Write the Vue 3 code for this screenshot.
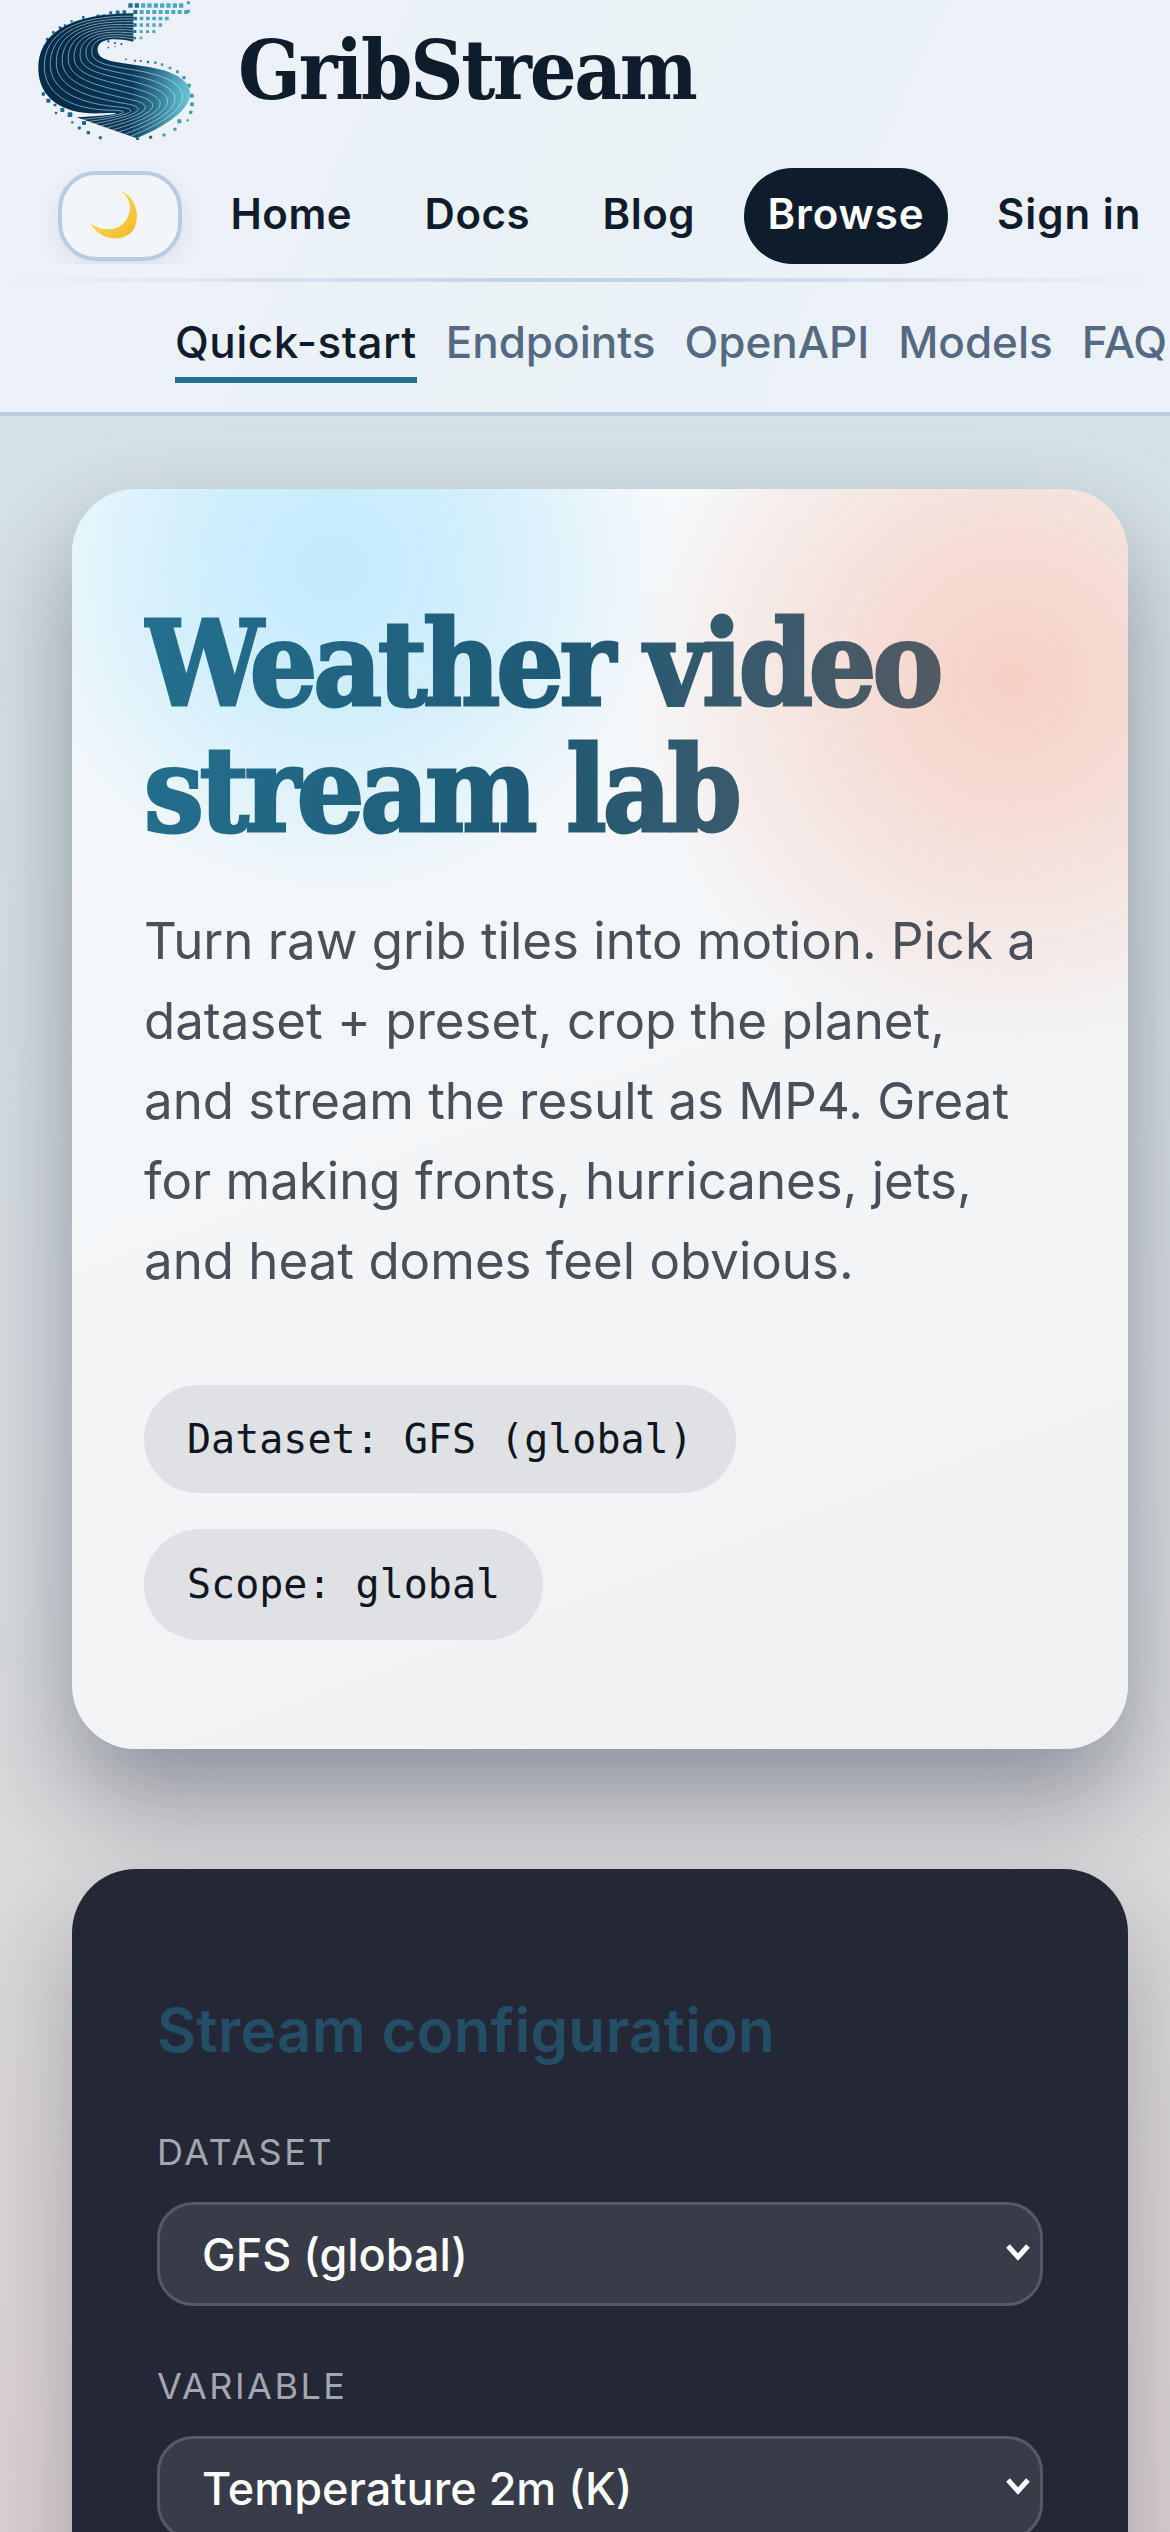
<script setup>
const navLinks = ['Home', 'Docs', 'Blog', 'Browse', 'Sign in']
const subLinks = ['Quick-start', 'Endpoints', 'OpenAPI', 'Models', 'FAQ']

const lerp = (a, b, t) => a + (b - a) * t
// outer and inner edge of the S ribbon, 3 cubic segments each
const edgeA = [340, 40, 150, 40, 52, 100, 55, 210, 58, 300, 135, 345, 245, 340, 320, 336, 300, 345, 170, 352]
const edgeB = [340, 125, 250, 105, 225, 130, 235, 160, 250, 205, 430, 180, 495, 245, 535, 290, 500, 350, 350, 415]
const strands = Array.from({ length: 9 }, (_, i) => {
  const p = edgeA.map((v, n) => lerp(v, edgeB[n], (i + 1) / 10).toFixed(1))
  return `M${p[0]} ${p[1]}C${p.slice(2, 8).join(' ')}C${p.slice(8, 14).join(' ')}C${p.slice(14, 20).join(' ')}`
})
const b = edgeB
const ribbonShape = `M${edgeA[0]} ${edgeA[1]}C${edgeA.slice(2, 8).join(' ')}C${edgeA.slice(8, 14).join(' ')}C${edgeA.slice(14, 20).join(' ')}` +
  `L${b[18]} ${b[19]}C${b[16]} ${b[17]} ${b[14]} ${b[15]} ${b[12]} ${b[13]}C${b[10]} ${b[11]} ${b[8]} ${b[9]} ${b[6]} ${b[7]}C${b[4]} ${b[5]} ${b[2]} ${b[3]} ${b[0]} ${b[1]}Z`

const rows = [[325, 495], [340, 495], [340, 450], [340, 430], [340, 410], [340, 370]]
const pixels = []
rows.forEach(([from, to], r) => {
  for (let x = from; x <= to; x += 19) pixels.push({ x, y: 10 + r * 20, s: 13 - r })
})
const dots = [
  [505, 8, 9], [505, 34, 9], [272, 38, 9], [293, 37, 11], [313, 36, 11], [252, 47, 8], [234, 48, 9], [190, 52, 8], [155, 64, 7],
  [135, 76, 7], [120, 83, 8], [100, 97, 8], [82, 118, 9], [70, 282, 10], [85, 302, 12], [105, 315, 8], [127, 330, 12],
  [108, 339, 7], [150, 344, 14], [157, 367, 7], [192, 369, 12], [178, 384, 9], [205, 398, 10], [241, 413, 9], [353, 418, 9],
  [392, 412, 9], [432, 405, 9], [465, 388, 9], [478, 364, 12], [503, 361, 7], [512, 337, 10], [516, 313, 11], [515, 287, 12],
  [507, 257, 11], [492, 233, 10], [472, 215, 9], [450, 204, 8], [426, 194, 8], [406, 188, 8], [384, 186, 7], [362, 183, 6],
  [345, 182, 6], [318, 178, 5], [285, 129, 6], [304, 132, 6], [265, 124, 7], [265, 143, 5], [285, 140, 4]
]
</script>

<template>
  <div class="page">
    <header class="site-header">
      <div class="brand">
        <svg class="logo" viewBox="0 0 600 420" aria-hidden="true">
          <defs>
            <linearGradient id="ribbon" gradientUnits="userSpaceOnUse" x1="160" y1="220" x2="510" y2="250">
              <stop offset="0" stop-color="#032c4a" />
              <stop offset="0.5" stop-color="#06395a" />
              <stop offset="1" stop-color="#66c5d8" />
            </linearGradient>
          </defs>
          <rect v-for="(p, i) in pixels" :key="'p' + i" :x="p.x" :y="p.y" :width="p.s" :height="p.s" rx="1.5" :fill="p.x < 345 ? '#1f6f92' : '#4ba8c2'" />
          <rect v-for="(d, i) in dots" :key="'d' + i" :x="d[0] - d[2] / 2" :y="d[1] - d[2] / 2" :width="d[2]" :height="d[2]" rx="2" :fill="d[0] > 400 ? '#3f9cb8' : '#1d6a8c'" />
          <path :d="ribbonShape" fill="url(#ribbon)" />
          <path v-for="(d, i) in strands" :key="'s' + i" :d="d" fill="none" stroke="#e6eff5" stroke-opacity="0.65" stroke-width="2.5" />
        </svg>
        <span class="brand-name">GribStream</span>
      </div>

      <nav class="main-nav">
        <button type="button" class="theme-toggle" aria-label="Toggle theme">
          <svg class="moon" viewBox="200 560 170 160" aria-hidden="true">
            <defs>
              <linearGradient id="moonFill" x1="0" y1="0" x2="1" y2="1">
                <stop offset="0" stop-color="#ffe680" />
                <stop offset="1" stop-color="#f4b51e" />
              </linearGradient>
            </defs>
            <path d="M303 570C345 585 358 640 340 675C320 712 250 720 213 660C255 690 300 680 318 650C335 620 330 590 303 570Z" fill="url(#moonFill)" />
          </svg>
        </button>
        <a v-for="link in navLinks" :key="link" class="nav-link" :class="{ active: link === 'Browse' }">{{ link }}</a>
      </nav>

      <nav class="sub-nav">
        <a v-for="link in subLinks" :key="link" class="sub-link" :class="{ active: link === 'Quick-start' }">{{ link }}</a>
      </nav>
    </header>

    <main class="content">
      <section class="hero">
        <h1 class="hero-title">Weather video stream lab</h1>
        <p class="hero-text">
          Turn raw grib tiles into motion. Pick a dataset + preset, crop the planet, and stream the result as MP4. Great for making fronts, hurricanes, jets, and heat domes feel obvious.
        </p>
        <div class="chips">
          <span class="chip">Dataset: GFS (global)</span>
          <span class="chip">Scope: global</span>
        </div>
      </section>

      <section class="config">
        <h2 class="config-title">Stream configuration</h2>
        <label class="field">
          <span class="field-label">Dataset</span>
          <span class="select-wrap">
            <select class="select"><option>GFS (global)</option></select>
            <svg class="chevron" viewBox="0 0 26 20" aria-hidden="true"><path d="M3 4l10 11L23 4" fill="none" stroke="#fff" stroke-width="5" /></svg>
          </span>
        </label>
        <label class="field">
          <span class="field-label">Variable</span>
          <span class="select-wrap">
            <select class="select"><option>Temperature 2m (K)</option></select>
            <svg class="chevron" viewBox="0 0 26 20" aria-hidden="true"><path d="M3 4l10 11L23 4" fill="none" stroke="#fff" stroke-width="5" /></svg>
          </span>
        </label>
      </section>
    </main>
  </div>
</template>

<style>
html,
body {
  margin: 0;
  background: #d3e4ea;
}
</style>

<style scoped>
.page {
  height: 2532px;
  overflow: hidden;
  font-family: Inter, "Noto Sans", sans-serif;
  background: linear-gradient(180deg, #d3e4ea 0%, #d9dde0 60%, #dcd2d2 100%);
}

.site-header {
  height: 416px;
  box-sizing: border-box;
  border-bottom: 4px solid #bccde0;
  background: linear-gradient(115deg, #edf1f9 0%, #eaf2f6 50%, #edf1f9 100%);
  overflow: hidden;
}

.brand {
  display: flex;
  align-items: center;
  height: 140px;
  padding-left: 20px;
}

.logo {
  width: 200px;
  height: 140px;
}

.brand-name {
  margin-left: 18px;
  font-family: "DejaVu Serif", serif;
  font-stretch: condensed;
  font-weight: 700;
  font-size: 82px;
  letter-spacing: -2.3px;
  color: #0e1c2c;
}

.main-nav {
  display: flex;
  align-items: center;
  gap: 24.5px;
  height: 124px;
  margin: 0 0 0 36px;
  padding: 28px 0 0 22px;
  box-sizing: border-box;
  overflow: hidden;
}

.theme-toggle {
  flex: none;
  width: 124px;
  height: 90px;
  padding: 0 10px 0 0;
  display: flex;
  align-items: center;
  justify-content: center;
  background: #f2f5f9;
  border: 4px solid #b8cbe0;
  border-radius: 38px;
  box-shadow: 0 10px 24px rgba(15, 23, 42, 0.07);
}

.moon {
  width: 60px;
  height: 56px;
}

.nav-link {
  flex: none;
  font-size: 42px;
  font-weight: 600;
  letter-spacing: 0.5px;
  color: #0e1c2c;
  padding: 0 24px 4px;
  line-height: 92px;
}

.nav-link.active {
  letter-spacing: 0.9px;
  background: #0e1c2c;
  color: #fff;
  border-radius: 48px;
}

.nav-link:last-child {
  letter-spacing: 1px;
}

.sub-nav {
  display: flex;
  gap: 29px;
  margin-top: 14px;
  padding: 22px 0 0 175px;
  position: relative;
  overflow: hidden;
}

.sub-nav::before {
  content: "";
  position: absolute;
  top: 0;
  left: 0;
  right: 0;
  height: 4px;
  background: linear-gradient(90deg, transparent, #c0d0e4 50%, transparent);
}

.sub-link {
  flex: none;
  font-size: 44px;
  line-height: 56px;
  font-weight: 500;
  color: #556a82;
  padding: 14px 0 7px;
  border-bottom: 6px solid transparent;
}

.sub-link.active {
  letter-spacing: 0.5px;
  color: #0e1c2c;
  border-bottom-color: #21708f;
}

.content {
  padding: 73px 42px 0 72px;
  display: flex;
  flex-direction: column;
  gap: 120px;
}

.hero {
  height: 1260px;
  box-sizing: border-box;
  padding: 112px 72px 0 72px;
  border-radius: 64px;
  background:
    radial-gradient(circle 340px at 260px 80px, #c3ebfc 0%, rgba(195, 235, 252, 0.7) 45%, rgba(195, 235, 252, 0) 100%),
    radial-gradient(circle 380px at 940px 190px, #f6d0c5 0%, rgba(246, 208, 197, 0.55) 50%, rgba(246, 208, 197, 0) 100%),
    linear-gradient(160deg, #f7fafc 0%, #eff1f3 100%);
  box-shadow: 0 48px 100px rgba(15, 23, 42, 0.38);
}

.hero-title {
  margin: 0;
  font-family: "DejaVu Serif", serif;
  font-stretch: condensed;
  font-weight: 700;
  font-size: 118px;
  line-height: 126px;
  letter-spacing: -4px;
  -webkit-text-stroke: 3px transparent;
  background: linear-gradient(100deg, #24708f 0%, #1f5a75 45%, #605a5e 95%);
  -webkit-background-clip: text;
  background-clip: text;
  color: transparent;
}

.hero-text {
  max-width: 895px;
  margin: 48px 0 0;
  font-size: 51px;
  line-height: 80px;
  color: #4a4f59;
}

.chips {
  display: flex;
  flex-direction: column;
  align-items: flex-start;
  gap: 36px;
  margin-top: 84px;
}

.chip {
  padding: 0 43px;
  line-height: 108px;
  border-radius: 56px;
  background: #dfe1e4;
  font-family: "DejaVu Sans Mono", monospace;
  font-size: 40px;
  color: #0e1622;
}

.chip:last-child {
  line-height: 111px;
}

.config {
  height: 800px;
  box-sizing: border-box;
  padding: 125px 85px 0;
  border-radius: 64px;
  background: #242836;
  box-shadow: 0 48px 100px rgba(15, 23, 42, 0.28);
}

.config-title {
  margin: 0 0 64px;
  font-size: 60px;
  line-height: 72px;
  letter-spacing: 0.3px;
  font-weight: 600;
  color: #234e66;
}

.field {
  display: block;
  margin-bottom: 58px;
}

.field-label {
  display: block;
  margin-bottom: 28px;
  font-size: 36px;
  line-height: 44px;
  letter-spacing: 2.5px;
  text-transform: uppercase;
  color: #a3a6b0;
}

.select-wrap {
  display: block;
  position: relative;
}

.select {
  display: block;
  width: 100%;
  height: 104px;
  padding: 0 42px;
  box-sizing: border-box;
  appearance: none;
  font: 500 45px Inter, sans-serif;
  color: #fff;
  background: #383b48;
  border: 3px solid #565966;
  border-radius: 36px;
}

.chevron {
  position: absolute;
  right: 12px;
  top: 40px;
  width: 26px;
  height: 20px;
  pointer-events: none;
}
</style>
